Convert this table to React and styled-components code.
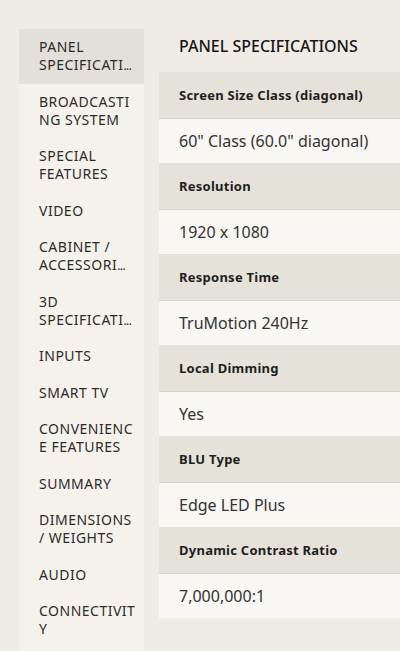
import * as React from 'react';
import styled, { createGlobalStyle } from 'styled-components';

const GlobalStyle = createGlobalStyle`
  html, body {
    margin: 0;
    padding: 0;
    background: #efece6;
    font-family: 'Noto Sans', 'Open Sans', sans-serif;
    -webkit-font-smoothing: antialiased;
  }
`;

const Page = styled.div`
  display: flex;
  align-items: stretch;
  gap: 15px;
  min-height: 100vh;
  height: 651px;
  padding: 29px 0 0 19px;
  box-sizing: border-box;
  overflow: hidden;
`;

const Sidebar = styled.nav`
  flex: 0 0 125px;
  background: #f5f2ec;
  display: flex;
  flex-direction: column;
`;

const NavItem = styled.a`
  display: block;
  padding: 9.25px 8px 9.25px 20px;
  font-size: 14px;
  line-height: 18px;
  letter-spacing: 0.5px;
  color: #2b2b2b;
  text-decoration: none;
  background: ${(p) => (p.$active ? '#e3dfda' : 'transparent')};
`;

const NavLine = styled.span`
  display: block;
  height: 18px;
  white-space: nowrap;
`;

const Ellipsis = styled.span`
  letter-spacing: -0.5px;
  font-size: 12px;
  line-height: 0;
`;

const Main = styled.main`
  flex: 1;
  min-width: 0;
`;

const Title = styled.h2`
  margin: 0;
  padding: 6px 20px 15px;
  font-size: 16px;
  line-height: 22px;
  font-weight: 500;
  color: #151515;
  white-space: nowrap;
`;

const SpecLabel = styled.div`
  height: 46px;
  display: flex;
  align-items: center;
  padding: 0 20px;
  background: #e5e2da;
  border-bottom: 1px solid #d7d3cb;
  font-size: 13px;
  font-weight: 700;
  letter-spacing: 0.25px;
  color: #1e1e1e;
  white-space: nowrap;
`;

const SpecValue = styled.div`
  height: 44px;
  display: flex;
  align-items: center;
  padding: 0 20px;
  background: #f9f7f3;
  font-size: 16px;
  color: #333;
  white-space: nowrap;
`;

// labels are pre-wrapped the way the narrow nav column breaks them
const navItems = [
  ['PANEL', 'SPECIFICATI', true],
  ['BROADCASTI', 'NG SYSTEM'],
  ['SPECIAL', 'FEATURES'],
  ['VIDEO'],
  ['CABINET /', 'ACCESSORI', true],
  ['3D', 'SPECIFICATI', true],
  ['INPUTS'],
  ['SMART TV'],
  ['CONVENIENC', 'E FEATURES'],
  ['SUMMARY'],
  ['DIMENSIONS', '/ WEIGHTS'],
  ['AUDIO'],
  ['CONNECTIVIT', 'Y'],
];

const specs = [
  ['Screen Size Class (diagonal)', '60" Class (60.0" diagonal)'],
  ['Resolution', '1920 x 1080'],
  ['Response Time', 'TruMotion 240Hz'],
  ['Local Dimming', 'Yes'],
  ['BLU Type', 'Edge LED Plus'],
  ['Dynamic Contrast Ratio', '7,000,000:1'],
];

const App = () => (
  <>
    <GlobalStyle />
    <Page>
      <Sidebar>
        {navItems.map(([first, second, cut], i) => (
          <NavItem key={first + i} href="#" $active={i === 0}>
            <NavLine>{first}</NavLine>
            {second && (
              <NavLine>
                {second}
                {cut && <Ellipsis>...</Ellipsis>}
              </NavLine>
            )}
          </NavItem>
        ))}
      </Sidebar>
      <Main>
        <Title>PANEL SPECIFICATIONS</Title>
        {specs.map(([label, value]) => (
          <React.Fragment key={label}>
            <SpecLabel>{label}</SpecLabel>
            <SpecValue>{value}</SpecValue>
          </React.Fragment>
        ))}
      </Main>
    </Page>
  </>
);

export default App;
